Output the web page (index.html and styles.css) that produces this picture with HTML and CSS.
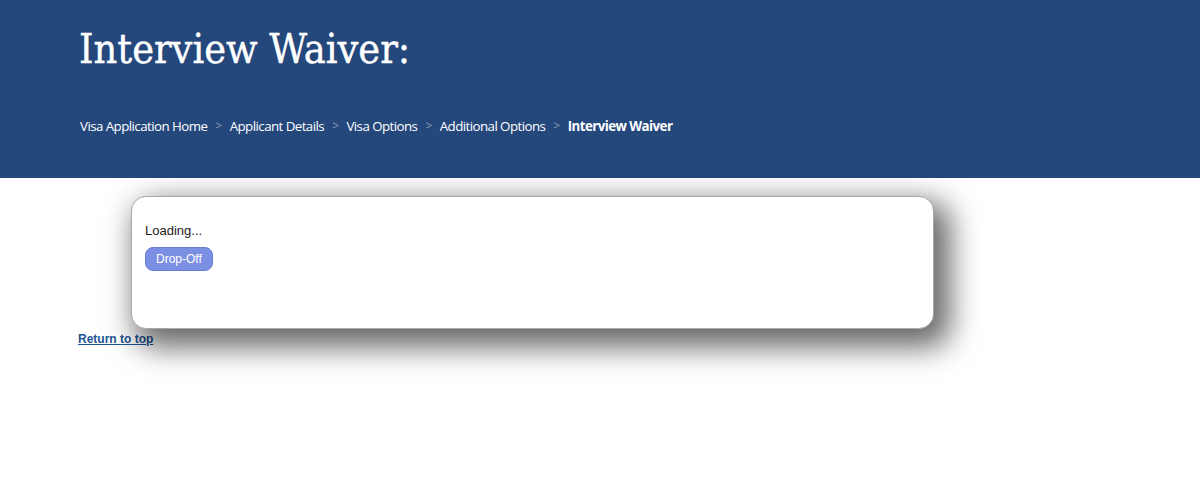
FILE: index.html
```html
<!DOCTYPE html>
<html lang="en">
<head>
<meta charset="utf-8">
<title>Interview Waiver</title>
<link rel="stylesheet" href="styles.css">
</head>
<body>
<header class="hero">
  <h1 class="hero-title">Interview Waiver:</h1>
  <nav class="crumbs">
    <a class="crumb" href="#">Visa Application Home</a>
    <span class="sep">&gt;</span>
    <a class="crumb" href="#">Applicant Details</a>
    <span class="sep">&gt;</span>
    <a class="crumb" href="#">Visa Options</a>
    <span class="sep">&gt;</span>
    <a class="crumb" href="#">Additional Options</a>
    <span class="sep">&gt;</span>
    <span class="crumb current">Interview Waiver</span>
  </nav>
</header>
<main class="content">
  <a class="top-link" href="#">Return to top</a>
  <div class="modal">
    <p class="loading">Loading...</p>
    <button class="drop-btn" type="button">Drop-Off</button>
  </div>
</main>
</body>
</html>
```
FILE: styles.css
```css
html, body {
  margin: 0;
  padding: 0;
  background: #ffffff;
}
body {
  font-family: "Liberation Sans", Arial, sans-serif;
  color: #111;
}
.hero {
  background: #24477c;
  height: 178px;
  box-sizing: border-box;
  padding: 25px 0 0 79px;
}
.hero-title {
  margin: 0;
  font-family: "DejaVu Serif Condensed", "DejaVu Serif", serif;
  font-stretch: condensed;
  font-weight: normal;
  font-size: 41px;
  line-height: 48px;
  color: #ffffff;
  -webkit-text-stroke: 0.4px #ffffff;
}
.crumbs {
  margin-top: 43px;
  display: flex;
  align-items: center;
  gap: 8px;
  font-family: "Open Sans", "Noto Sans", sans-serif;
  font-size: 13.3px;
  line-height: 20px;
  letter-spacing: -0.55px;
  padding-left: 1px;
}
.crumb {
  color: #ffffff;
  text-decoration: none;
}
.crumb.current {
  font-weight: bold;
}
.sep {
  color: #8d9bb5;
  font-size: 12px;
}
.content {
  position: relative;
  padding: 151px 0 0 78px;
  height: 317px;
  box-sizing: border-box;
}
.top-link {
  font-family: "Liberation Sans", Arial, sans-serif;
  font-weight: bold;
  font-size: 12px;
  color: #205493;
  text-decoration: underline;
}
.modal {
  position: absolute;
  left: 131px;
  top: 18px;
  width: 803px;
  height: 133px;
  box-sizing: border-box;
  background: #ffffff;
  border: 1px solid #a9a9a9;
  border-radius: 15px;
  box-shadow: 10px 12px 30px 6px rgba(0, 0, 0, 0.6);
  padding: 26px 0 0 13px;
}
.loading {
  margin: 0 0 9px 0;
  font-size: 13px;
  line-height: 15px;
  color: #1a1a1a;
}
.drop-btn {
  font-family: "Liberation Sans", Arial, sans-serif;
  font-size: 12px;
  color: #ffffff;
  background: #7b8fe3;
  border: 1px solid #6b7fd4;
  border-radius: 8px;
  height: 24px;
  padding: 0 10px;
}
```
